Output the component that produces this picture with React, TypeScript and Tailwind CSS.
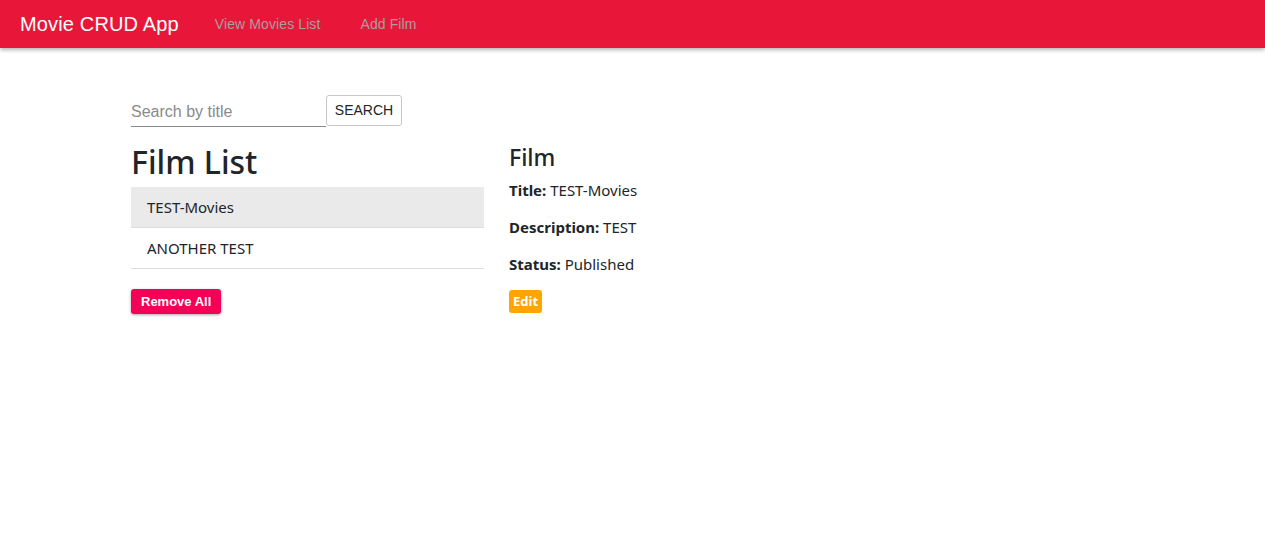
import React from 'react';

export default function App() {
  const films = ['TEST-Movies', 'ANOTHER TEST'];
  const body = { fontFamily: '"Noto Sans", "Open Sans", sans-serif' };
  const arial = { fontFamily: '"Liberation Sans", Arial, sans-serif' };

  return (
    <div className="min-h-[542px] bg-white text-[#212529]" style={body}>
      <nav className="flex h-12 items-center bg-[#e8173a] px-5 shadow-[0_2px_4px_rgba(0,0,0,0.3)]" style={arial}>
        <span className="text-[20px] tracking-[0.15px] text-white">Movie CRUD App</span>
        <span className="ml-[36px] text-[14px] tracking-[0.1px] text-[#a89f9f]">View Movies List</span>
        <span className="ml-[40px] text-[14px] tracking-[0.1px] text-[#a89f9f]">Add Film</span>
      </nav>

      <div className="ml-[131px] mt-[47px] flex">
        <div className="w-[353px]">
          <div className="flex items-start">
            <div className="w-[195px] border-b border-[#8a8a8a] pt-[6px] pb-[3px] text-[16px] leading-[22px] text-[#8a8a8a]" style={arial}>
              Search by title
            </div>
            <button className="h-[31px] w-[76px] rounded-[3px] border border-[#c8c8c8] text-[14px] text-[#212529]" style={arial}>
              SEARCH
            </button>
          </div>
          <h2 className="mt-[16px] text-[32px] font-medium leading-[38px]">Film List</h2>
          <ul className="mt-[6px]">
            {films.map((f, i) => (
              <li
                key={f}
                className={`h-[41px] border-b border-[#dedede] px-4 text-[15px] leading-[40px] ${i === 0 ? 'bg-[#eaeaea]' : ''}`}
              >
                {f}
              </li>
            ))}
          </ul>
          <button
            className="mt-[20px] h-[25px] rounded-[3px] bg-[#f50057] px-[10px] text-[13px] font-bold text-white shadow-[0_1px_3px_rgba(0,0,0,0.35)]"
            style={arial}
          >
            Remove All
          </button>
        </div>

        <div className="ml-[25px] pt-[48px]">
          <h4 className="text-[23px] font-medium leading-7">Film</h4>
          <div className="mt-[8px] flex flex-col gap-[15px] text-[15px] leading-[22px]">
            <div><span className="font-bold">Title:</span> TEST-Movies</div>
            <div><span className="font-bold">Description:</span> TEST</div>
            <div><span className="font-bold">Status:</span> Published</div>
          </div>
          <span className="mt-[15px] inline-block rounded-[3px] bg-[#ffa500] px-[4px] py-[3px] text-[13px] font-bold leading-[17px] text-white">
            Edit
          </span>
        </div>
      </div>
    </div>
  );
}
